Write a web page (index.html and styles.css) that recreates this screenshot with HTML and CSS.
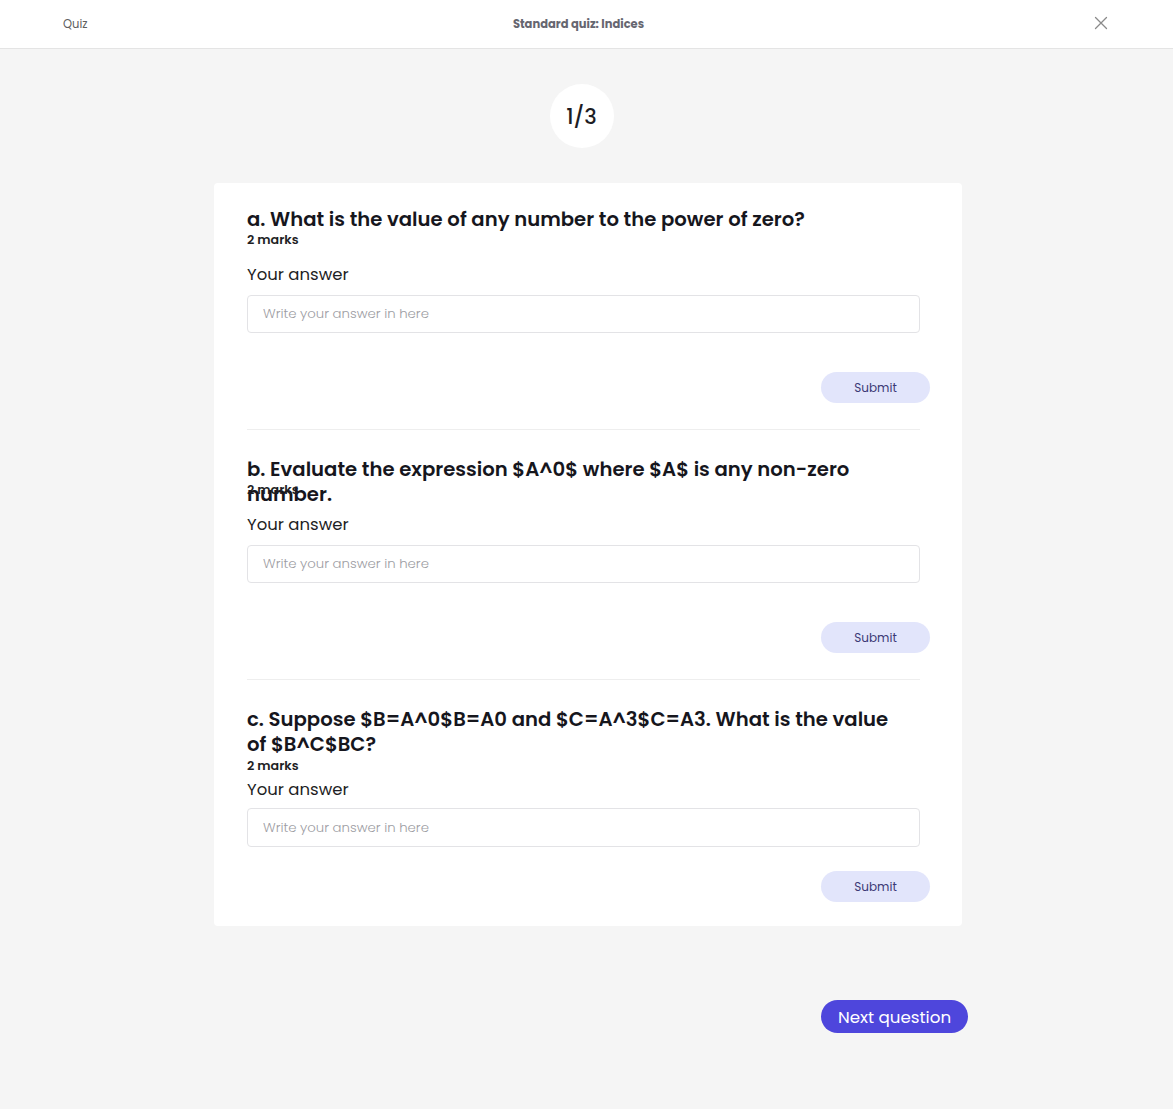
FILE: index.html
```html
<!DOCTYPE html>
<html lang="en">
<head>
<meta charset="utf-8">
<title>Standard quiz: Indices</title>
<link rel="stylesheet" href="styles.css">
</head>
<body>
<header class="topbar">
  <div class="topbar-left">Quiz</div>
  <div class="topbar-title">Standard quiz: Indices</div>
  <div class="topbar-right">
    <button class="close-btn" aria-label="Close">
      <svg width="14" height="14" viewBox="0 0 14 14"><path d="M1.5 1.5 L12.5 12.5 M12.5 1.5 L1.5 12.5" stroke="#8a8a8a" stroke-width="1.3" stroke-linecap="round" fill="none"/></svg>
    </button>
  </div>
</header>

<main class="page">
  <div class="progress">1/3</div>

  <div class="quiz">
    <section class="card">
      <div class="q">
        <h2 class="q-title">a. What is the value of any number to the power of zero?</h2>
        <div class="q-marks">2 marks</div>
        <div class="q-label">Your answer</div>
        <input class="q-input" type="text" placeholder="Write your answer in here">
        <div class="q-actions"><button class="btn-submit">Submit</button></div>
      </div>
      <hr class="q-divider">
      <div class="q">
        <h2 class="q-title q-title--fixed">b. Evaluate the expression $A^0$ where $A$ is any non-zero number.</h2>
        <div class="q-marks">2 marks</div>
        <div class="q-label">Your answer</div>
        <input class="q-input" type="text" placeholder="Write your answer in here">
        <div class="q-actions"><button class="btn-submit">Submit</button></div>
      </div>
      <hr class="q-divider">
      <div class="q q--compact">
        <h2 class="q-title">c. Suppose $B=A^0$B=A0 and $C=A^3$C=A3. What is the value of $B^C$BC?</h2>
        <div class="q-marks">2 marks</div>
        <div class="q-label">Your answer</div>
        <input class="q-input" type="text" placeholder="Write your answer in here">
        <div class="q-actions"><button class="btn-submit">Submit</button></div>
      </div>
    </section>

    <div class="quiz-footer">
      <button class="btn-next">Next question</button>
    </div>
  </div>
</main>
</body>
</html>
```

FILE: styles.css
```css
* { box-sizing: border-box; }

html, body {
  margin: 0;
  padding: 0;
}

body {
  background: #f5f5f5;
  font-family: "Poppins", "Open Sans", "Noto Sans", sans-serif;
  color: #16161d;
  min-height: 1109px;
}

.topbar {
  height: 49px;
  background: #ffffff;
  border-bottom: 1px solid #e4e4e4;
  display: grid;
  grid-template-columns: 1fr auto 1fr;
  align-items: center;
  padding: 0 65px 0 63px;
}

.topbar-left {
  font-size: 11.5px;
  color: #5f5f5f;
  padding-top: 1px;
}

.topbar-title {
  font-size: 11.5px;
  font-weight: 700;
  color: #666670;
  padding-right: 14px;
  padding-top: 1px;
}

.topbar-right {
  display: flex;
  justify-content: flex-end;
}

.close-btn {
  border: 0;
  background: none;
  padding: 0;
  width: 14px;
  height: 14px;
  display: block;
  margin-top: -2px;
}

.close-btn svg { display: block; }

.page {
  display: flex;
  flex-direction: column;
  align-items: center;
  padding-top: 35px;
  padding-left: 3px;
}

.progress {
  width: 64px;
  height: 64px;
  border-radius: 50%;
  background: #ffffff;
  display: flex;
  align-items: center;
  justify-content: center;
  font-size: 21px;
  font-weight: 500;
  color: #1d1d24;
  margin-right: 13px;
}

.quiz {
  width: 748px;
  margin-top: 35px;
}

.card {
  background: #ffffff;
  border-radius: 4px;
  padding: 24px 42px 24px 33px;
}

.q-title {
  margin: 0;
  max-width: 655px;
  font-size: 19.65px;
  line-height: 25px;
  font-weight: 600;
  color: #16161d;
}

.q-title--fixed {
  height: 25px;
}

.q-marks {
  font-size: 12.7px;
  line-height: 16px;
  font-weight: 600;
  color: #1e1e24;
}

.q-label {
  margin-top: 15px;
  font-size: 16.5px;
  line-height: 24px;
  color: #1e1e24;
}

.q-input {
  display: block;
  width: 100%;
  height: 38px;
  margin-top: 8px;
  border: 1px solid #e3e3e6;
  border-radius: 4px;
  padding: 0 15px;
  font-family: inherit;
  font-size: 13.25px;
  font-weight: 300;
  color: #222;
  background: #fff;
  outline: none;
}

.q-input::placeholder {
  color: #9d9da3;
}

.q-actions {
  margin-top: 39px;
  display: flex;
  justify-content: flex-end;
}

.btn-submit {
  width: 109px;
  height: 31px;
  margin-right: -10px;
  border: 0;
  border-radius: 16px;
  background: #e2e5fb;
  color: #3c3a76;
  font-family: inherit;
  font-size: 12px;
  font-weight: 400;
}

.q-divider {
  margin: 26px 0 27px;
  border: 0;
  border-top: 1px solid #eeeeee;
  height: 0;
}

.q--compact .q-marks { padding-top: 1px; }
.q--compact .q-label { margin-top: 4px; }
.q--compact .q-input { margin-top: 6px; height: 39px; }
.q--compact .q-actions { margin-top: 24px; }

.quiz-footer {
  margin-top: 74px;
  display: flex;
  justify-content: flex-end;
}

.btn-next {
  width: 147px;
  height: 33px;
  margin-right: -6px;
  border: 0;
  border-radius: 17px;
  background: #4e46dc;
  color: #ffffff;
  font-family: inherit;
  font-size: 16.7px;
  font-weight: 400;
}
```
